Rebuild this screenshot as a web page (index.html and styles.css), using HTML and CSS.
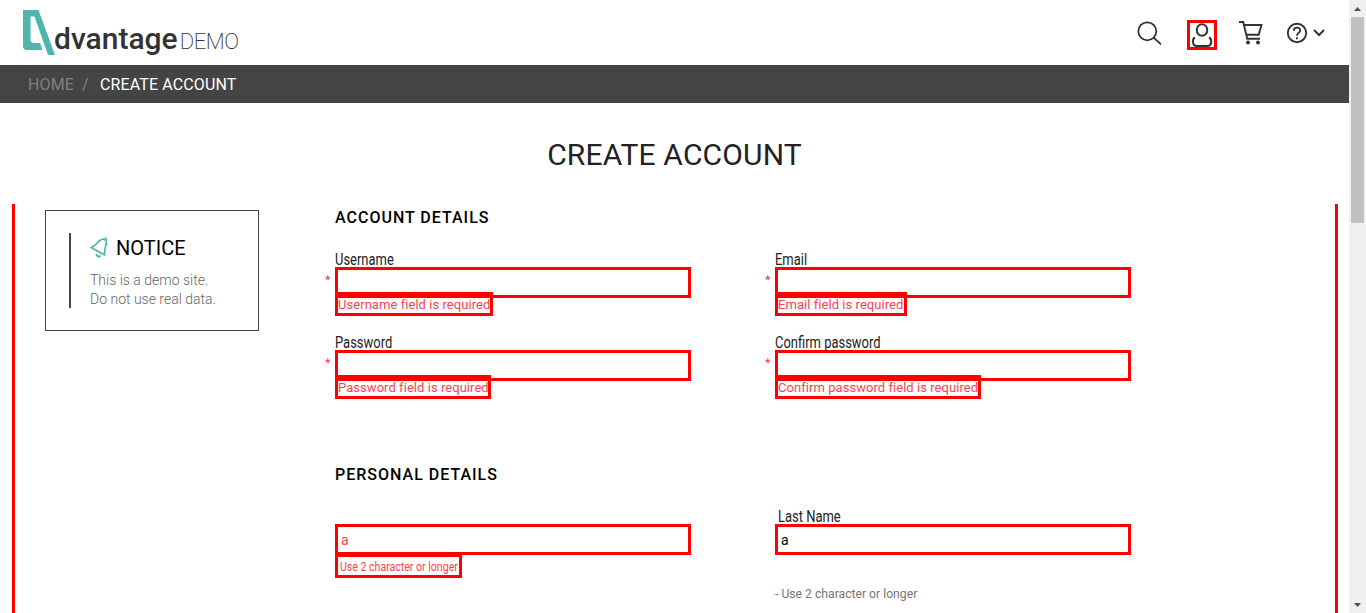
FILE: index.html
```
<!DOCTYPE html>
<html lang="en">
<head>
<meta charset="utf-8">
<title>Advantage DEMO</title>
<link rel="stylesheet" href="styles.css">
</head>
<body>
<div class="page">
  <header class="header">
    <a class="logo">
      <svg class="logo-mark" width="33" height="46" viewBox="0 0 33 46"><path fill="#50b5ae" d="M0 0H15.500L32 45H26.500Q25 45 24.500 43.500L11.500 6.500H7.500V31L9.500 33H17L19.500 40H4Q0 40 0 36Z"/></svg>
      <span class="logo-name">dvantage</span><span class="logo-demo">DEMO</span>
    </a>
    <nav class="tools">
      <svg class="tool-search" width="28" height="28" viewBox="0 0 28 28" fill="none" stroke="#2f2f2f" stroke-width="1.700"><circle cx="11.300" cy="11.300" r="9"/><path d="M17.500 17.500L25 24.300"/></svg>
      <span class="tool-user"><svg width="24" height="24" viewBox="0 0 24 24" fill="none" stroke="#333" stroke-width="2"><ellipse cx="12" cy="7" rx="5.300" ry="5.800"/><path d="M5 14.500C2.800 15.500 3 17.500 3 18.500Q3 23 7 23H17Q21.200 23 21.200 18.500C21.200 17.500 21.200 15.500 19 14.500"/></svg></span>
      <svg class="tool-cart" width="26" height="26" viewBox="0 0 26 26" fill="none" stroke="#333" stroke-width="1.900"><path d="M1 2H5.200L9.300 18.800H22"/><path d="M5.600 5H23.500L20.700 14.800H8.500"/><circle cx="10" cy="22.500" r="2" fill="#333" stroke="none"/><circle cx="20" cy="22.500" r="2" fill="#333" stroke="none"/></svg>
      <svg class="tool-help" width="40" height="22" viewBox="0 0 40 22" fill="none" stroke="#333" stroke-width="1.900"><circle cx="11" cy="11" r="9.200"/><path d="M7.800 8.700C7.800 4.600 14.200 4.600 14.200 8.400C14.200 10.800 11 10.700 11 13.700M11 15.200V17.200"/><path d="M28 8L33 13L38 8" stroke-width="2"/></svg>
    </nav>
  </header>
  <nav class="crumbs"><span class="crumb-home">HOME</span><span class="crumb-sep">/</span><span class="crumb-here">CREATE ACCOUNT</span></nav>
  <h1 class="title">CREATE ACCOUNT</h1>
  <main class="content">
    <aside class="notice">
      <div class="notice-body">
        <h2 class="notice-title"><svg width="18" height="21" viewBox="0 0 18 21" fill="none" stroke="#50b5ae" stroke-width="1.700"><path d="M1 10.500C6.500 9 7 4 11.500 2.500Q13.500 1.900 15 2.600Q16.700 3.600 16.400 6C15.200 11 14 14 14.800 18Z" stroke-linejoin="round"/><path d="M6.500 17C6.500 20 9.500 20.300 10.500 18.500" stroke-width="2"/><circle cx="15.500" cy="2" r="1.400" stroke-width="1"/></svg><span>NOTICE</span></h2>
        <p class="notice-text">This is a demo site.<br>Do not use real data.</p>
      </div>
    </aside>
    <form class="form">
      <h3 class="section">ACCOUNT DETAILS</h3>
      <div class="grid">
        <div class="field required"><label class="label"><span class="narrow">Username</span></label><div class="input"></div><div class="error error-user">Username field is required</div></div>
        <div class="field required"><label class="label"><span class="narrow">Email</span></label><div class="input"></div><div class="error error-email">Email field is required</div></div>
        <div class="field required"><label class="label"><span class="narrow">Password</span></label><div class="input"></div><div class="error error-pass">Password field is required</div></div>
        <div class="field required"><label class="label"><span class="narrow">Confirm password</span></label><div class="input"></div><div class="error error-confirm">Confirm password field is required</div></div>
      </div>
      <h3 class="section section-personal">PERSONAL DETAILS</h3>
      <div class="grid">
        <div class="field"><div class="label"></div><div class="input invalid">a</div><div class="error error-short"><span class="narrow-error">Use 2 character or longer</span></div></div>
        <div class="field"><label class="label label-inset"><span class="narrow">Last Name</span></label><div class="input">a</div><div class="hint"><span class="narrow-hint">- Use 2 character or longer</span></div></div>
      </div>
    </form>
  </main>
</div>
<div class="scrollbar">
  <svg width="7" height="4" viewBox="0 0 7 4"><path fill="#505050" d="M0 4L3.500 0L7 4Z"/></svg>
  <div class="thumb"></div>
  <svg class="arrow-down" width="7" height="4" viewBox="0 0 7 4"><path fill="#505050" d="M0 0H7L3.500 4Z"/></svg>
</div>
</body>
</html>
```
FILE: styles.css
```
* { box-sizing: border-box; }
body { margin: 0; height: 613px; overflow: hidden; display: flex; background: #fff; color: #000; font-family: Roboto, "Liberation Sans", sans-serif; }
h1, h2, h3, p { margin: 0; font-weight: 400; }
svg { display: block; flex: none; }
.page { width: 1349px; height: 613px; overflow: hidden; display: flex; flex-direction: column; }
.header { height: 65px; flex: none; display: flex; justify-content: space-between; padding: 10px 23px 0 23px; }
.logo { display: flex; align-items: flex-start; color: #333; white-space: nowrap; }
.logo-name { font-size: 30px; line-height: 34px; font-weight: 500; margin: 12px 0 0 -2px; }
.logo-demo { font-size: 22px; line-height: 34px; font-weight: 200; margin: 15px 0 0 2px; letter-spacing: -.4px; }
.tools { display: flex; align-items: flex-start; }
.tool-search { margin: 10px 23px 0 0; }
.tool-user { width: 30px; height: 30px; border: 3px solid red; margin: 10px 21px 0 0; }
.tool-cart { margin: 10px 22px 0 0; }
.tool-help { margin-top: 12px; }
.crumbs { height: 38px; flex: none; display: flex; align-items: center; padding-left: 28px; background: #444; color: #fff; font-size: 16px; letter-spacing: .12px; }
.crumb-home { color: #808080; width: 54px; }
.crumb-sep { color: #808080; width: 18px; }
.title { height: 101px; flex: none; line-height: 103px; text-align: center; font-size: 30px; letter-spacing: .15px; color: #222; }
.content { height: 480px; flex: none; margin: 0 11px 0 12px; border: solid red; border-width: 0 3px; display: flex; padding: 6px 0 0 30px; }
.notice { width: 214px; height: 121px; border: 1px solid #444; padding: 22px 0 0 23px; }
.notice-body { height: 75px; border-left: 2px solid #444; padding-left: 19px; }
.notice-title { display: flex; align-items: center; gap: 8px; height: 28px; font-size: 20px; line-height: 26px; }
.notice-title span { padding-top: 1px; }
.notice-text { font-size: 14px; line-height: 19px; font-weight: 300; color: #666; padding-top: 10px; white-space: nowrap; }
.form { margin-left: 76px; }
.section { height: 39px; line-height: 15px; font-size: 16px; font-weight: 500; letter-spacing: 1px; }
.section-personal { margin-top: 68px; }
.grid { display: grid; grid-template-columns: 356px 356px; column-gap: 84px; row-gap: 16px; }
.field { position: relative; display: flex; flex-direction: column; align-items: flex-start; }
.required::before { content: "*"; position: absolute; left: -10px; top: 21px; font-size: 13px; line-height: 20px; color: #ff3f4f; }
.label { height: 18px; line-height: 21px; font-size: 16px; color: #222; }
.label-inset { padding-left: 3px; }
.narrow { display: inline-block; transform: scaleX(.81); transform-origin: left; white-space: nowrap; }
.input { width: 356px; height: 31px; border: 3px solid red; padding-left: 3px; font-size: 14px; line-height: 27px; }
.invalid { color: #ff3f4f; }
.error { height: 24px; margin-top: -6px; border: 3px solid red; font-size: 13px; line-height: 19px; letter-spacing: .05px; color: #ff3f4f; white-space: nowrap; position: relative; }
.error-user { width: 158px; }
.error-email { width: 132px; }
.error-pass { width: 156px; }
.error-confirm { width: 206px; }
.error-short { width: 127px; margin-top: -1px; padding-left: 2px; font-size: 12px; line-height: 20px; letter-spacing: 0; }
.narrow-error { display: inline-block; transform: scaleX(.88); transform-origin: left; }
.hint { margin-top: 29px; font-size: 13px; line-height: 20px; color: #777; white-space: nowrap; }
.narrow-hint { display: inline-block; transform: scaleX(.937); transform-origin: left; }
.scrollbar { width: 17px; height: 613px; background: #f0f0f0; display: flex; flex-direction: column; align-items: center; padding: 7px 0 6px; }
.thumb { width: 13px; height: 206px; margin-top: 6px; background: #c1c1c1; }
.arrow-down { margin-top: auto; }
```
